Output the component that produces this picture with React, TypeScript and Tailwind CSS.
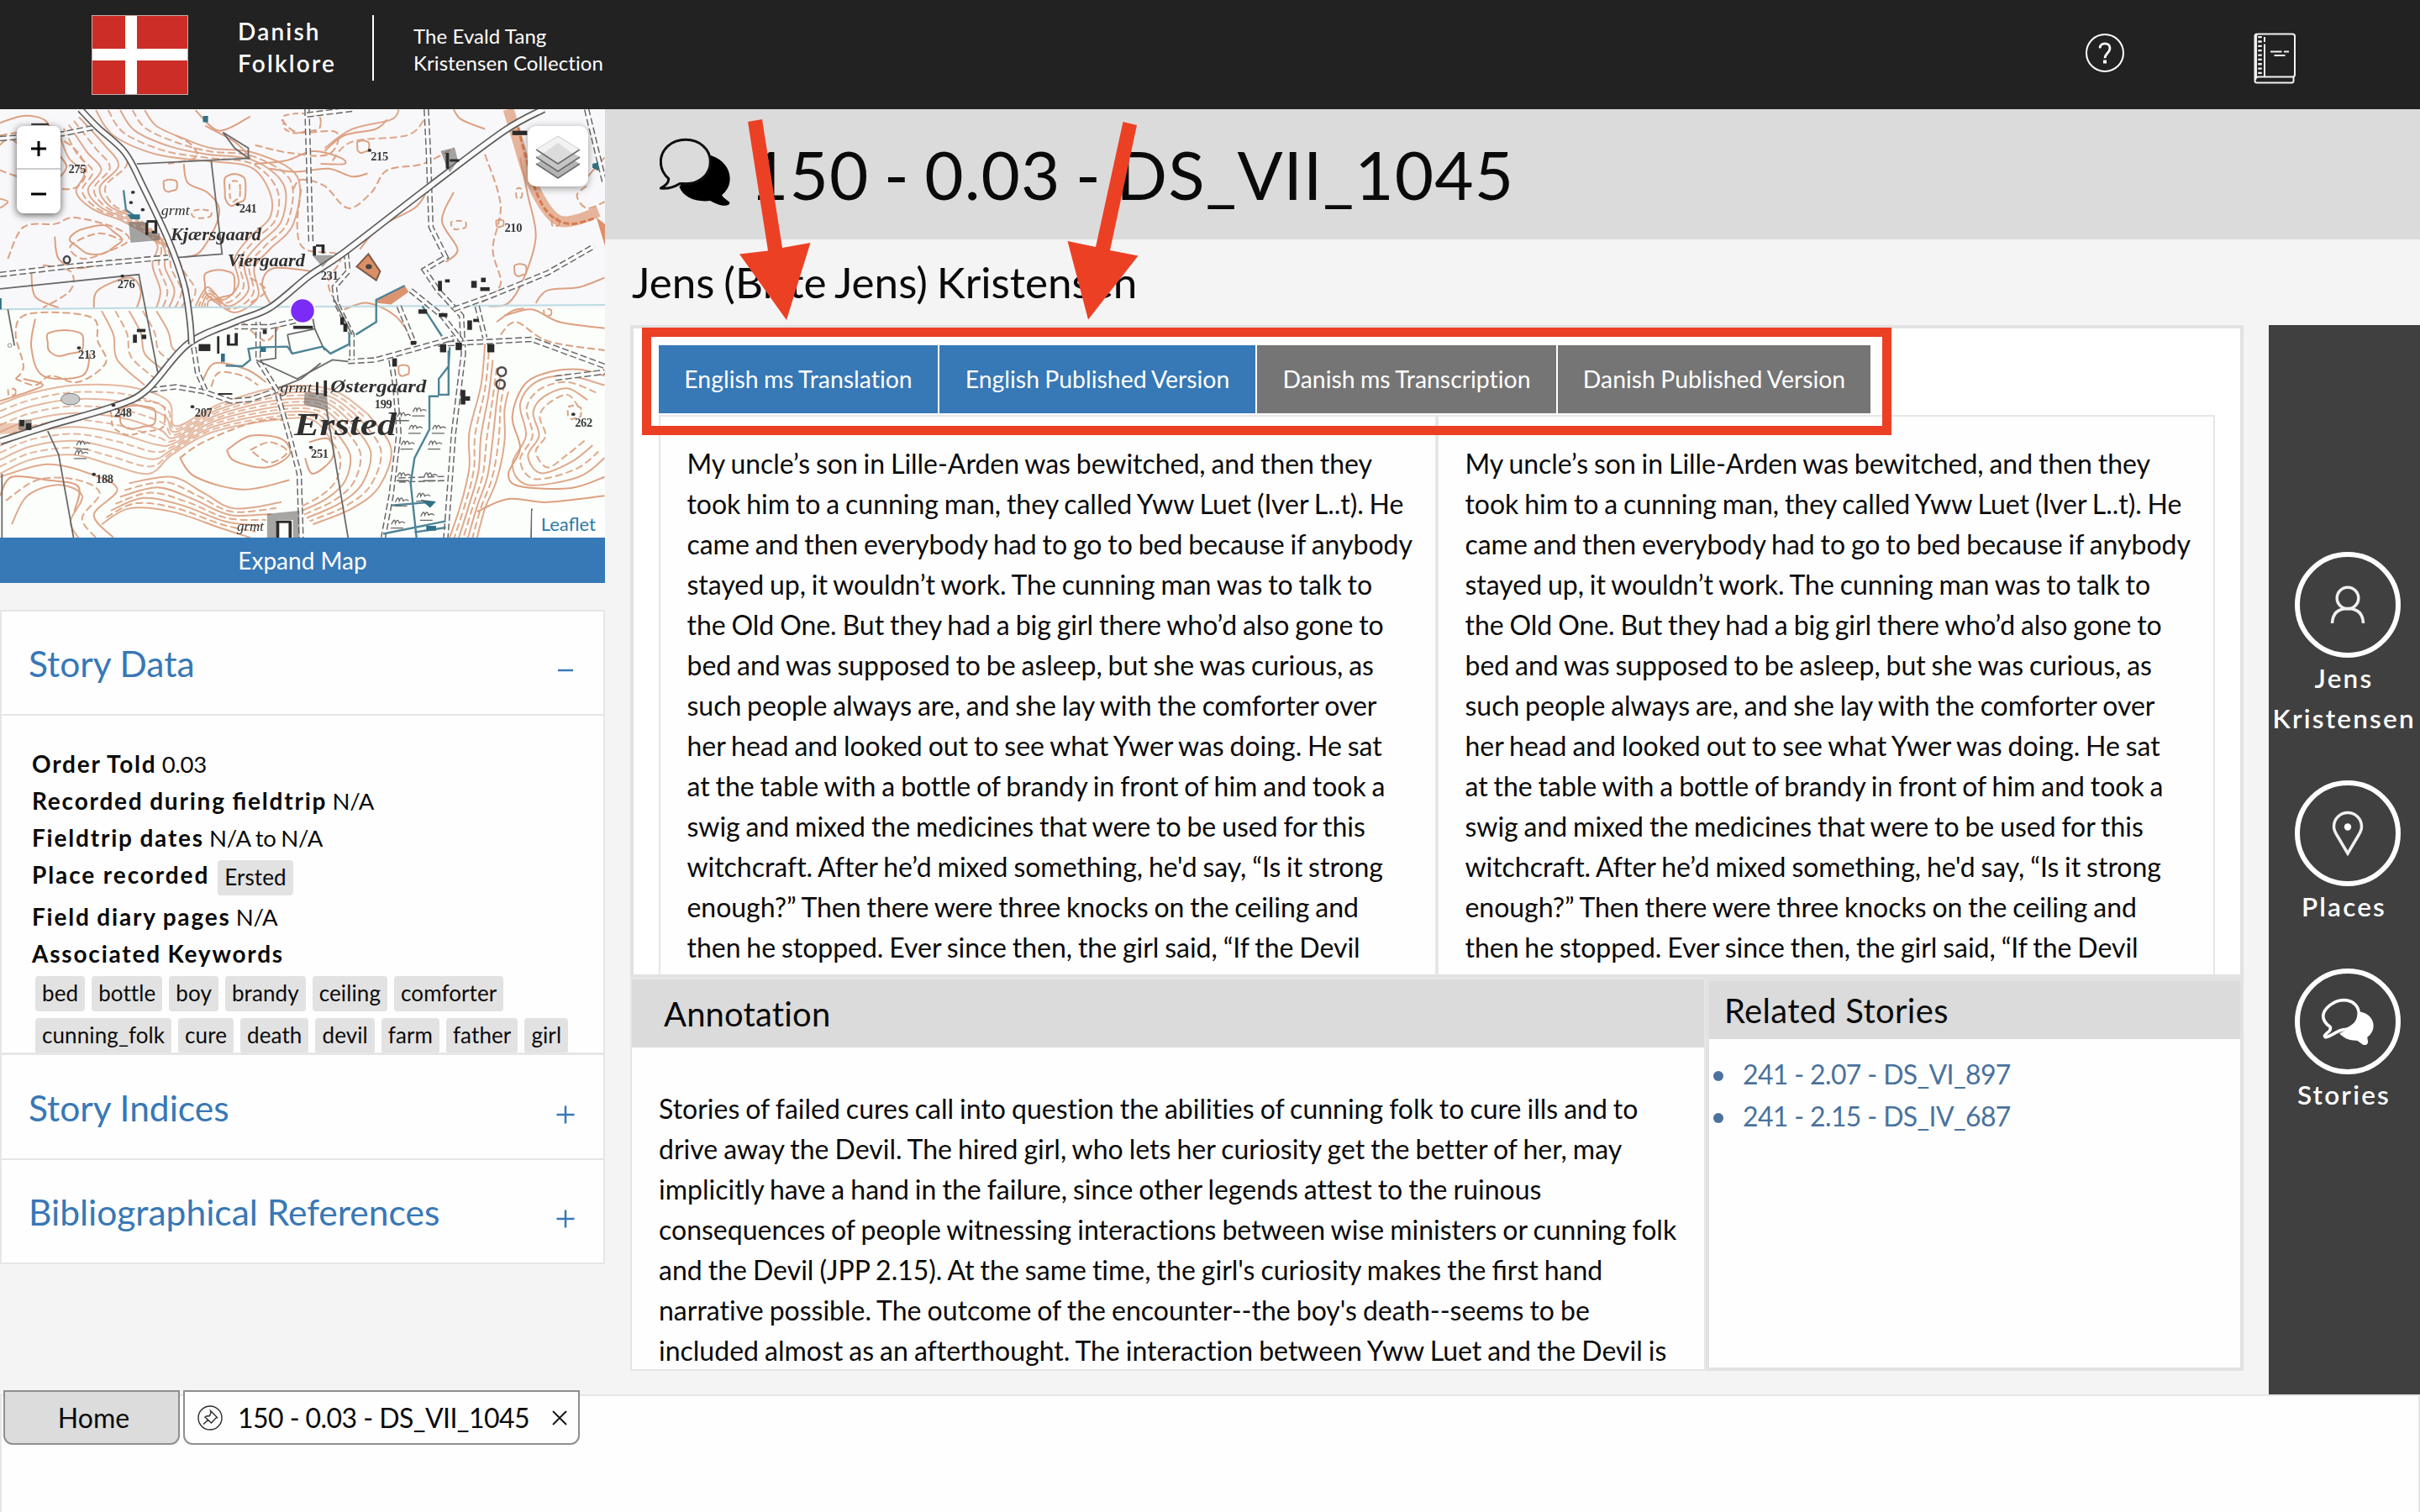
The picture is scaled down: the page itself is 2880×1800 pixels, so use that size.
import type { ReactNode } from "react";

type Pt = [number, number];

/* ---------- geometry helpers for the survey map ---------- */

function smooth(p: Pt[], closed = false) {
  const n = p.length;
  const at = (i: number): Pt => (closed ? p[(i + n) % n] : p[Math.max(0, Math.min(n - 1, i))]);
  let d = `M${p[0][0]} ${p[0][1]}`;
  const last = closed ? n : n - 1;
  for (let i = 0; i < last; i++) {
    const [a, b, c, e] = [at(i - 1), at(i), at(i + 1), at(i + 2)];
    d += `C${b[0] + (c[0] - a[0]) / 6} ${b[1] + (c[1] - a[1]) / 6} ${c[0] - (e[0] - b[0]) / 6} ${c[1] - (e[1] - b[1]) / 6} ${c[0]} ${c[1]}`;
  }
  return d + (closed ? "Z" : "");
}

function line(p: Pt[]) {
  return "M" + p.map((q) => q.join(" ")).join("L");
}

function between(a: Pt[], b: Pt[], n: number): Pt[][] {
  return Array.from({ length: n }, (_, k) => {
    const t = k / (n - 1);
    return a.map((q, i): Pt => [q[0] + (b[i][0] - q[0]) * t, q[1] + (b[i][1] - q[1]) * t]);
  });
}

function ring(cx: number, cy: number, rx: number, ry: number, wob = 0.12, ph = 0): Pt[] {
  return Array.from({ length: 10 }, (_, i): Pt => {
    const t = (i / 10) * Math.PI * 2;
    const k = 1 + wob * Math.sin(i * 2.3 + ph);
    return [cx + Math.cos(t) * rx * k, cy + Math.sin(t) * ry * k];
  });
}

const families: Pt[][][] = [
  between(
    [[150, 100], [175, 180], [215, 230], [195, 290], [240, 345], [320, 385], [400, 450], [390, 520], [410, 600], [400, 655]],
    [[215, 40], [290, 130], [325, 200], [270, 270], [290, 330], [350, 370], [440, 470], [470, 540], [500, 600], [480, 655]],
    6,
  ),
  between(
    [[245, 30], [290, 110], [400, 170], [520, 190], [640, 210], [690, 290], [690, 370], [640, 430], [600, 500], [610, 580], [570, 630], [530, 590], [500, 650]],
    [[370, 30], [400, 80], [470, 120], [540, 150], [650, 165], [760, 240], [750, 390], [690, 470], [650, 530], [660, 620], [600, 670], [540, 630], [530, 655]],
    5,
  ),
  between(
    [[0, 960], [80, 925], [190, 900], [330, 905], [430, 950], [450, 1030], [560, 960], [720, 905], [850, 915], [940, 990]],
    [[0, 1180], [80, 1135], [190, 1120], [280, 1150], [380, 1180], [440, 1120], [540, 1050], [700, 1010], [800, 1010], [850, 1080]],
    11,
  ),
  between(
    [[940, 990], [1000, 1100], [970, 1220], [900, 1290], [800, 1340]],
    [[850, 1080], [870, 1130], [860, 1200], [820, 1250], [760, 1290]],
    6,
  ),
  between(
    [[1240, 770], [1230, 900], [1200, 1050], [1200, 1160], [1180, 1270], [1150, 1382]],
    [[1300, 920], [1290, 980], [1290, 1080], [1270, 1200], [1240, 1290], [1220, 1382]],
    7,
  ),
  between(
    [[0, 1190], [120, 1150], [230, 1180], [300, 1230], [240, 1310], [290, 1382]],
    [[30, 1340], [70, 1250], [150, 1215], [210, 1250], [180, 1330], [200, 1382]],
    3,
  ),
  between(
    [[330, 1210], [440, 1190], [520, 1240], [600, 1290], [720, 1270]],
    [[260, 1340], [330, 1290], [440, 1300], [560, 1350], [640, 1382]],
    7,
  ),
  between(
    [[830, 150], [900, 90], [1000, 60], [1020, 28]],
    [[850, 190], [900, 130], [1040, 110], [1085, 60]],
    2,
  ),
  between(
    [[260, 665], [290, 740], [300, 820], [370, 900]],
    [[400, 665], [430, 730], [440, 780], [460, 800]],
    5,
  ),
  between(
    [[1546, 900], [1450, 870], [1370, 890], [1330, 960], [1345, 1060], [1310, 1150], [1350, 1215], [1480, 1190], [1546, 1130]],
    [[1480, 970], [1450, 930], [1400, 960], [1380, 1000], [1395, 1060], [1370, 1110], [1400, 1160], [1450, 1120], [1500, 1070]],
    4,
  ),
];

const contours: Pt[][] = [
  [[0, 70], [60, 48], [115, 62], [125, 110], [70, 150], [25, 120], [0, 140]],
  [[0, 110], [70, 100], [150, 120], [200, 165], [220, 230], [180, 280], [70, 250], [0, 220]],
  [[150, 170], [170, 210], [140, 250], [90, 240], [60, 210]],
  [[0, 310], [20, 320], [0, 340]],
  [[20, 500], [60, 400], [140, 390], [190, 370], [290, 400], [330, 440], [270, 480], [210, 500], [180, 460], [250, 420], [310, 440]],
  [[140, 430], [150, 500], [200, 530], [280, 510], [350, 500]],
  [[80, 540], [90, 620], [150, 655]],
  [[110, 520], [180, 540], [180, 600], [110, 655]],
  [[240, 655], [250, 600], [330, 560], [360, 600], [350, 655]],
  [[470, 200], [480, 260], [530, 290], [560, 340], [550, 400], [510, 480], [470, 495]],
  [[450, 110], [490, 140], [500, 180], [430, 200]],
  [[500, 30], [560, 95], [640, 50]],
  [[525, 80], [600, 130], [640, 180]],
  [[720, 60], [760, 100], [860, 100], [840, 170], [740, 165], [650, 140]],
  [[650, 200], [730, 190], [800, 160], [870, 180], [880, 200], [820, 200]],
  [[690, 215], [760, 225], [840, 215], [900, 240], [940, 230]],
  [[750, 280], [770, 250], [830, 270], [890, 340], [950, 290], [990, 220], [1080, 200], [1160, 150]],
  [[1160, 290], [1130, 380], [1170, 470], [1140, 510]],
  [[990, 60], [960, 90], [880, 110], [830, 160]],
  [[770, 280], [760, 400], [780, 470], [870, 490], [840, 570], [850, 620]],
  [[920, 470], [970, 400], [1060, 340], [1090, 290]],
  [[1330, 180], [1350, 300], [1370, 430], [1340, 560], [1300, 640], [1250, 650]],
  [[1240, 170], [1280, 330], [1260, 470], [1280, 580], [1230, 640]],
  [[1240, 90], [1180, 60], [1160, 28]],
  [[690, 640], [670, 580], [700, 530], [800, 540]],
  [[1500, 270], [1475, 300], [1500, 340], [1546, 320]],
  [[1546, 180], [1510, 230], [1490, 260]],
  [[1546, 560], [1480, 590], [1400, 600], [1370, 640]],
  [[40, 880], [60, 840], [40, 740], [60, 680], [150, 670], [240, 690], [250, 760], [270, 830], [200, 890], [130, 870], [90, 900], [40, 880]],
  [[90, 690], [80, 780], [110, 870], [210, 870], [230, 800]],
  [[0, 950], [50, 930], [110, 900], [60, 880]],
  [[540, 905], [560, 860], [620, 870], [660, 900]],
  [[520, 880], [550, 830], [630, 850], [680, 890]],
  [[880, 660], [940, 640], [1010, 680], [1060, 760]],
  [[640, 560], [680, 600], [640, 640]],
  [[1546, 870], [1480, 850], [1400, 860], [1340, 900], [1310, 1000], [1330, 1100], [1300, 1180], [1330, 1220], [1460, 1225], [1546, 1190]],
  [[1290, 680], [1360, 660], [1430, 700], [1546, 720]],
  [[1280, 740], [1320, 700], [1400, 760], [1546, 790]],
  [[1270, 700], [1310, 665], [1340, 657]],
  [[1220, 1300], [1300, 1260], [1400, 1270], [1546, 1250]],
  [[460, 1130], [520, 1080], [640, 1020], [720, 1010], [745, 1060]],
  [[460, 1130], [500, 1190], [620, 1230], [740, 1200]],
  [[580, 1105], [640, 1060], [720, 1070], [740, 1120], [680, 1160], [600, 1140], [580, 1105]],
  [[640, 1105], [690, 1080], [735, 1110], [690, 1145], [640, 1105]],
  [[790, 1080], [840, 1070], [850, 1130], [800, 1180], [780, 1130]],
  [[0, 1250], [30, 1190], [120, 1200], [200, 1220], [190, 1300]],
  [[620, 700], [680, 760], [720, 700]],
];

const rings: Pt[][] = [
  ring(600, 280, 28, 52), ring(600, 285, 14, 34), ring(435, 268, 18, 20), ring(515, 358, 26, 14, 0.05),
  ring(928, 145, 16, 20), ring(1172, 393, 20, 14), ring(1278, 388, 10, 12), ring(1327, 293, 8, 18),
  ring(1330, 535, 16, 20), ring(1420, 385, 10, 14), ring(165, 765, 48, 42), ring(30, 922, 10, 12),
  ring(1032, 853, 14, 18), ring(770, 70, 50, 32), ring(350, 1000, 48, 38), ring(1468, 985, 18, 22),
  ring(560, 580, 40, 48), ring(1400, 670, 10, 12), ring(245, 440, 62, 44, 0.1, 2), ring(350, 1000, 72, 56),
];

const roads: { p: Pt[]; w: number }[] = [
  { p: [[0, 1078], [120, 1030], [290, 968], [375, 915], [480, 770], [600, 700], [690, 655], [790, 555], [880, 480], [1100, 270], [1290, 95], [1390, 27]], w: 5.5 },
  { p: [[205, 27], [250, 85], [320, 165], [365, 270], [430, 440], [470, 580], [485, 690], [490, 770]], w: 5 },
];

const dashedRoads: Pt[][] = [
  [[785, 27], [790, 230], [795, 450]],
  [[1090, 27], [1095, 150], [1102, 400], [1140, 495], [1085, 535], [1120, 600], [1180, 680], [1185, 800], [1160, 1050], [1140, 1382]],
  [[1500, 27], [1530, 180], [1546, 260]],
  [[0, 550], [170, 525], [430, 495]],
  [[0, 120], [160, 105], [240, 85]],
  [[1120, 770], [1360, 755], [1546, 840]],
  [[890, 825], [960, 820], [1120, 765], [1160, 750]],
  [[1420, 878], [1546, 858]],
  [[385, 915], [450, 905], [520, 920], [590, 950], [640, 945], [710, 915]],
  [[495, 780], [505, 860], [525, 915]],
  [[710, 930], [740, 1060], [765, 1180], [770, 1382]],
  [[1160, 660], [1250, 620], [1400, 545], [1520, 460]],
  [[1020, 650], [1060, 770]],
  [[1050, 600], [1130, 680], [1180, 760]],
  [[1220, 650], [1240, 750]],
  [[660, 700], [660, 820], [710, 920]],
  [[780, 690], [690, 715], [600, 715]],
  [[1000, 820], [1010, 900], [1020, 1050], [1000, 1250], [980, 1382]],
  [[885, 480], [890, 540], [855, 590], [860, 640], [900, 740], [900, 820]],
  [[1020, 1200], [1140, 1195]],
  [[785, 45], [900, 27]],
];

const thinLines: Pt[][] = [
  [[350, 200], [640, 182]],
  [[540, 190], [568, 485], [445, 497]],
  [[0, 595], [355, 550], [405, 870]],
  [[570, 100], [635, 150], [635, 182], [600, 150], [570, 100]],
  [[20, 660], [37, 775]],
  [[122, 1045], [150, 1120], [188, 1382]],
  [[835, 975], [890, 1382]],
  [[735, 740], [805, 722], [800, 690]],
  [[735, 740], [745, 800]],
  [[805, 722], [830, 790]],
  [[705, 720], [705, 815], [665, 822]],
  [[655, 820], [760, 880], [850, 820], [890, 825]],
  [[710, 910], [770, 880], [820, 830]],
  [[855, 630], [900, 740]],
  [[1360, 1290], [1358, 1382]],
  [[5, 1180], [5, 1382]],
];

const streams: Pt[][] = [
  [[316, 283], [322, 345], [355, 375]],
  [[1035, 585], [962, 630], [962, 700], [910, 740]],
  [[577, 838], [620, 840], [640, 820], [635, 785], [665, 780], [735, 778], [748, 800], [825, 778], [845, 800], [893, 770], [893, 735]],
  [[1080, 650], [1130, 745]],
  [[1150, 780], [1147, 840], [1122, 880], [1122, 930], [1147, 930], [1147, 790]],
  [[1122, 935], [1098, 935], [1098, 1040], [1060, 1130], [1050, 1210], [1065, 1382]],
  [[980, 1370], [1140, 1330]],
  [[1000, 1280], [1100, 1270]],
  [[1060, 1365], [1140, 1350]],
];

const houses: [number, number, number, number][] = [
  [372, 385, 7, 40], [395, 385, 7, 30], [388, 412, 14, 8], [375, 378, 27, 8], [800, 460, 8, 30], [822, 455, 8, 28], [808, 455, 20, 7],
  [350, 722, 22, 10], [340, 740, 10, 26], [362, 740, 12, 14], [555, 745, 6, 55], [580, 740, 8, 34], [600, 735, 8, 38], [582, 768, 26, 7],
  [508, 770, 30, 22], [672, 724, 10, 14], [750, 712, 50, 10], [870, 685, 10, 24], [878, 705, 10, 26], [1125, 770, 16, 26],
  [1165, 765, 16, 24], [1246, 770, 18, 26], [1003, 815, 12, 26], [1050, 760, 14, 12], [1195, 695, 12, 30], [1210, 690, 14, 10],
  [1120, 570, 10, 32], [1138, 565, 12, 10], [1205, 570, 14, 22], [1230, 560, 12, 14], [1228, 590, 24, 12], [1178, 915, 12, 46], [1188, 935, 14, 14],
  [1140, 165, 8, 50], [1150, 185, 24, 8], [808, 890, 6, 40], [828, 885, 8, 50], [706, 1330, 8, 52], [738, 1330, 8, 52], [706, 1328, 38, 8],
  [50, 1010, 12, 20], [66, 1020, 14, 22], [1070, 660, 22, 14], [1122, 672, 22, 12], [1310, 95, 38, 14], [80, 72, 44, 5], [558, 925, 36, 5],
];

const spots: { x: number; y: number; t: string }[] = [
  { x: 175, y: 228, t: "275" }, { x: 612, y: 354, t: "241" }, { x: 948, y: 188, t: "215" }, { x: 1290, y: 415, t: "210" },
  { x: 300, y: 592, t: "276" }, { x: 820, y: 566, t: "231" }, { x: 200, y: 817, t: "213" }, { x: 292, y: 998, t: "248" },
  { x: 498, y: 998, t: "207" }, { x: 795, y: 1130, t: "251" }, { x: 245, y: 1208, t: "188" }, { x: 958, y: 973, t: "199" }, { x: 1470, y: 1030, t: "262" },
];

const names: { x: number; y: number; t: string; s: number; w: number }[] = [
  { x: 436, y: 441, t: "Kjærsgaard", s: 21, w: 108 },
  { x: 582, y: 524, t: "Viergaard", s: 20, w: 92 },
  { x: 845, y: 921, t: "Østergaard", s: 22, w: 114 },
  { x: 752, y: 1058, t: "Ersted", s: 38, w: 122 },
  { x: 412, y: 361, t: "grmt", s: 17, w: 34 },
  { x: 716, y: 923, t: "grmt", s: 17, w: 38 },
  { x: 606, y: 1361, t: "grmt", s: 17, w: 32 },
];

const meadow: Pt[] = [
  [1070, 985], [1030, 1000], [1060, 1040], [1120, 1040], [1040, 1090], [1110, 1090], [1030, 1190], [1098, 1190],
  [1025, 1270], [1080, 1255], [1015, 1340], [1090, 1315], [210, 1090], [205, 1120],
];

function SurveyMap() {
  return (
    <div className="absolute inset-0 overflow-hidden">
      <svg className="absolute inset-0 h-full w-full blur-[0.6px]" viewBox="0 27 1547 1355" preserveAspectRatio="none" fill="none">
        <rect x="0" y="27" width="1547" height="630" fill="#f8f8fa" />
        <rect x="0" y="657" width="1547" height="725" fill="#fcfefb" />
        <g stroke="#dca081" strokeWidth="2">
          {families.map((f, i) =>
            f.map((p, k) => (
              <path key={`${i}-${k}`} d={smooth(p)} vectorEffect="non-scaling-stroke" strokeDasharray={k % 2 ? "9 4" : undefined} opacity={i === 2 ? 0.75 : 0.9} />
            )),
          )}
          {contours.map((p, i) => (
            <path key={i} d={smooth(p)} vectorEffect="non-scaling-stroke" strokeDasharray={i % 3 === 1 ? "9 4" : undefined} />
          ))}
          {rings.map((p, i) => (
            <path key={i} d={smooth(p, true)} vectorEffect="non-scaling-stroke" strokeDasharray={i % 2 ? "7 4" : undefined} />
          ))}
        </g>
        <path d={smooth([[1300, 27], [1325, 130], [1350, 230], [1390, 330], [1430, 380], [1480, 375], [1530, 350]])} stroke="#dd9069" strokeWidth="13" opacity=".65" vectorEffect="non-scaling-stroke" />
        <path d={smooth([[1320, 60], [1345, 180], [1375, 300], [1410, 365], [1460, 390], [1525, 370]])} stroke="#d67a50" strokeWidth="3" strokeDasharray="7 3" vectorEffect="non-scaling-stroke" />
        <path d="M1525 370L1547 390V460Z" fill="#dd9069" />
        <path d="M912 525L942 485L972 540L962 568Z" fill="#dc8f66" stroke="#7b5b48" strokeWidth="2" vectorEffect="non-scaling-stroke" />
        <path d="M962 630L1035 585L1045 605L1000 645L965 640Z" fill="#dc9470" />
        <circle cx="943" cy="525" r="8" fill="#444" />
        <path d="M0 1020H60V1050L0 1055Z" fill="#dc9470" opacity=".5" />
        <path d="M0 660L700 652L1547 646" stroke="#bcdbe2" strokeWidth="2" vectorEffect="non-scaling-stroke" />
        {dashedRoads.map((p, i) => (
          <g key={i}>
            <path d={line(p)} stroke="#686868" strokeWidth="6.5" strokeDasharray="8 3.5" vectorEffect="non-scaling-stroke" />
            <path d={line(p)} stroke="#fbfcfb" strokeWidth="3.5" vectorEffect="non-scaling-stroke" />
          </g>
        ))}
        {thinLines.map((p, i) => (
          <path key={i} d={line(p)} stroke="#6a6a6a" strokeWidth="1.8" vectorEffect="non-scaling-stroke" />
        ))}
        {roads.map((r, i) => (
          <g key={i}>
            <path d={smooth(r.p)} stroke="#5c5c5c" strokeWidth={r.w + 3.4} vectorEffect="non-scaling-stroke" />
            <path d={smooth(r.p)} stroke="#fafafa" strokeWidth={r.w} vectorEffect="non-scaling-stroke" />
          </g>
        ))}
        {streams.map((p, i) => (
          <path key={i} d={line(p)} stroke="#4f8496" strokeWidth="2.4" vectorEffect="non-scaling-stroke" />
        ))}
        <path d="M519 48H532V68H519ZM1515 200L1530 195V222L1515 212ZM665 780H680V795H665ZM565 800H575V826H565ZM1075 1262L1115 1268L1100 1288ZM1090 1345H1115V1360H1090ZM0 625H4V660H0ZM325 360H358V375H335Z" fill="#2f7187" />
        <path d="M330 385H370V415L408 420V440L335 448ZM780 925H835L838 978L778 960ZM1128 160L1162 150L1170 190L1150 225L1140 200ZM684 1308L765 1298V1382H750V1325H705V1382H684ZM800 490H850L825 525ZM48 1010H80V1040H48Z" fill="#6f6b68" opacity=".6" stroke="#444" strokeWidth="1.5" />
        {houses.map((h, i) => (
          <rect key={i} x={h[0]} y={h[1]} width={h[2]} height={h[3]} fill="#2b2b2b" />
        ))}
        <g stroke="#4a4a4a" strokeWidth="2.5">
          <ellipse cx="171" cy="503" rx="8" ry="11" vectorEffect="non-scaling-stroke" />
          <ellipse cx="1283" cy="857" rx="11" ry="14" vectorEffect="non-scaling-stroke" />
          <ellipse cx="1280" cy="897" rx="11" ry="14" vectorEffect="non-scaling-stroke" />
          <ellipse cx="25" cy="774" rx="5" ry="6" strokeWidth="1.5" />
        </g>
        <ellipse cx="180" cy="944" rx="24" ry="18" fill="#c9c9c9" stroke="#6a6a6a" strokeWidth="2" />
        {meadow.map(([x, y], i) => (
          <path key={i} d={`M${x - 14} ${y}q8 -24 10 -4q6 -18 10 0q8 -8 14 0M${x - 16} ${y + 12}h32`} stroke="#666" strokeWidth="1.3" vectorEffect="non-scaling-stroke" />
        ))}
        {([[340, 290], [335, 322], [365, 345], [945, 157], [608, 328], [202, 782], [492, 968], [795, 1097], [240, 1182], [1466, 992], [290, 963], [313, 555]] as Pt[]).map(([x, y], i) => (
          <circle key={i} cx={x} cy={y} r="5" fill="#333" />
        ))}
      </svg>
      <svg className="absolute inset-0 h-full w-full blur-[0.5px]" viewBox="0 0 720 510">
        <g className="font-['Liberation_Serif',serif]" fill="#303030" fontStyle="italic">
          {names.map((n, i) => (
            <text key={i} x={n.x / 2.1486} y={n.y / 2.6576 - 10} fontSize={n.s} textLength={n.w} lengthAdjust="spacingAndGlyphs" fontWeight={n.s > 18 ? 700 : 400}>
              {n.t}
            </text>
          ))}
        </g>
        <g className="font-['Liberation_Serif',serif]" fill="#3a3a3a">
          {spots.map((n, i) => (
            <text key={i} x={n.x / 2.1486} y={n.y / 2.6576 - 10} fontSize="14.5" fontWeight="700" textLength="21">
              {n.t}
            </text>
          ))}
        </g>
      </svg>
      <svg className="absolute top-[224px] left-[344px] h-8 w-8" viewBox="0 0 32 32">
        <circle cx="16" cy="16" r="14.5" fill="#7b2bf7" stroke="#fff" strokeWidth="1.5" />
      </svg>
    </div>
  );
}

/* ---------- icons ---------- */

function LayersIcon() {
  return (
    <svg className="h-[52px] w-[54px]" viewBox="0 0 54 52">
      <path d="M1 34L27 51L53 34L27 18Z" fill="#b4b4b4" />
      <path d="M1 34L27 51L53 34" fill="none" stroke="#6b6b6b" strokeWidth="1.5" />
      <path d="M1 26L27 43L53 26L27 10Z" fill="#c6c6c6" />
      <path d="M1 26L27 43L53 26" fill="none" stroke="#6b6b6b" strokeWidth="1.5" />
      <path d="M1 17L27 34L53 17L27 1Z" fill="#dcdcdc" />
      <path d="M1 17L27 1L53 17L45 22L27 9L9 22Z" fill="#f2f2f2" />
      <path d="M1 17L27 34L53 17" fill="none" stroke="#6b6b6b" strokeWidth="1.5" />
      <path d="M1 17L27 1L53 17" fill="none" stroke="#cfcfcf" strokeWidth="1" />
    </svg>
  );
}

function HelpIcon() {
  return (
    <svg className="h-[46px] w-[46px]" viewBox="0 0 46 46" fill="none" stroke="#fff">
      <circle cx="23" cy="23" r="22" strokeWidth="2" />
      <path d="M17.2 17.4C17 13.800 19.500 11.800 23 11.800S29 14 29 17.200C29 20 27.600 21.500 25.900 23.400C24.200 25.300 23 26.300 23 29.200" strokeWidth="2.800" />
      <path d="M23 31.500V35.500" strokeWidth="4" />
    </svg>
  );
}

function BookIcon() {
  return (
    <svg className="h-[61px] w-[51px]" viewBox="0 0 51 61" fill="none" stroke="#f2f2f2" strokeWidth="2">
      <path d="M3 53V4Q3 1.500 5.500 1.500H46Q49 1.500 49 4V49.500Q49 52.500 46.500 52.500H5Q2.500 53 2 56M1.500 4Q1.500 1.500 4 1.500M1.500 4V57Q1.500 59.500 4 59.500H45.500Q47.500 59.500 47.500 57V53" />
      <path d="M13 5V11M13 13.500V52" />
      <path d="M20 22.500H33.500M36 22.500H42M24.500 27H37.500" />
      <path d="M7.500 4V51" strokeWidth="4.500" strokeDasharray="2.300 3.050" />
    </svg>
  );
}

function TalkIcon() {
  return (
    <svg className="h-[82px] w-[84px]" viewBox="75 42 252 244">
      <path d="M258 104C300 118 326 150 326 187C326 212 314 232 297 246C303 257 315 263 325 271C326 282 312 284 300 283C282 281 268 272 256 266C205 272 160 255 145 216Z" fill="#000" />
      <path d="M168 48C218 48 256 82 256 127C256 172 218 205 168 205C160 205 152 204 146 205C130 215 104 224 79 221C96 212 108 200 107 187C90 172 79 152 79 127C79 82 118 48 168 48Z" fill="#dbdbdb" stroke="#0d0d0d" strokeWidth="9" />
    </svg>
  );
}

function StoriesGlyph() {
  return (
    <svg className="h-[56px] w-[64px]" viewBox="126 130 192 170">
      <path d="M268 180C298 186 316 208 315 232C314 252 304 264 293 272C292 280 298 288 294 294C290 302 282 302 275 298L256 284C226 286 204 272 192 258L230 240Z" fill="#fff" />
      <path d="M208 138C242 138 264 162 262 190C260 220 236 242 206 245C184 247 168 266 142 272C134 268 142 262 147 257C158 250 162 240 158 234C142 224 133 208 133 194C136 166 174 138 208 138Z" fill="#404040" stroke="#fff" strokeWidth="11" />
    </svg>
  );
}

function PersonGlyph() {
  return (
    <svg className="h-[46px] w-[42px]" viewBox="0 0 42 46" fill="none" stroke="#f0f0f0" strokeWidth="3.500">
      <circle cx="21" cy="15" r="12.800" />
      <path d="M2.500 45C3 33 10 27.500 21 27.500S39 33 39.500 45" />
    </svg>
  );
}

function PinGlyph() {
  return (
    <svg className="h-[54px] w-[38px]" viewBox="0 0 38 54" fill="none" stroke="#f0f0f0" strokeWidth="3.500">
      <path d="M19 51L6 29C3.500 25 2.500 22.500 2.500 19C2.500 9.500 10 2.500 19 2.500S35.500 9.500 35.500 19C35.500 22.500 34.500 25 32 29Z" />
      <circle cx="19" cy="19.500" r="4.200" fill="#fff" stroke="none" />
    </svg>
  );
}

function TabPin() {
  return (
    <svg className="h-[30px] w-[30px]" viewBox="0 0 30 30" fill="none" stroke="#2b2b2b" strokeWidth="1.400">
      <circle cx="15" cy="15" r="14" />
      <path d="M15.500 6.500L23.500 14.500L21.500 15.500L17.500 20L16.500 21L9 14L10.500 13L14.500 12.500L16 8.500ZM13 17L7 22.500" />
    </svg>
  );
}

/* ---------- content ---------- */

const story = [
  "My uncle’s son in Lille-Arden was bewitched, and then they",
  "took him to a cunning man, they called Yww Luet (Iver L..t). He",
  "came and then everybody had to go to bed because if anybody",
  "stayed up, it wouldn’t work. The cunning man was to talk to",
  "the Old One. But they had a big girl there who’d also gone to",
  "bed and was supposed to be asleep, but she was curious, as",
  "such people always are, and she lay with the comforter over",
  "her head and looked out to see what Ywer was doing. He sat",
  "at the table with a bottle of brandy in front of him and took a",
  "swig and mixed the medicines that were to be used for this",
  "witchcraft. After he’d mixed something, he'd say, “Is it strong",
  "enough?” Then there were three knocks on the ceiling and",
  "then he stopped. Ever since then, the girl said, “If the Devil",
];

const Fi = () => <span className="[font-variant-ligatures:normal] [font-feature-settings:'liga']">fi</span>;

const annotation: ReactNode[] = [
  "Stories of failed cures call into question the abilities of cunning folk to cure ills and to",
  "drive away the Devil. The hired girl, who lets her curiosity get the better of her, may",
  "implicitly have a hand in the failure, since other legends attest to the ruinous",
  "consequences of people witnessing interactions between wise ministers or cunning folk",
  <>and the Devil (JPP 2.15). At the same time, the girl's curiosity makes the <Fi />rst hand</>,
  "narrative possible. The outcome of the encounter--the boy's death--seems to be",
  "included almost as an afterthought. The interaction between Yww Luet and the Devil is",
];

const keywords = [
  ["bed", "bottle", "boy", "brandy", "ceiling", "comforter"],
  ["cunning_folk", "cure", "death", "devil", "farm", "father", "girl"],
];

function Chip({ children }: { children: ReactNode }) {
  return <span className="block h-[42px] rounded-[4px] bg-[#e2e2e2] px-2 text-[26px] leading-[41px] tracking-[0.1px]">{children}</span>;
}

function Field({ label, value }: { label: ReactNode; value?: string }) {
  return (
    <p className="h-11 text-[28px] leading-[44px] [word-spacing:-1px]">
      <b className="tracking-[1.8px]">{label}</b> <span className="text-[27.5px] tracking-[-0.25px]">{value}</span>
    </p>
  );
}

function SectionHead({ title, open, tall }: { title: string; open?: boolean; tall?: boolean }) {
  return (
    <div className={`flex shrink-0 items-center justify-between pt-[2px] pr-[34px] pl-8 text-[#3778b6] ${tall ? "h-[123px]" : "h-[122px]"}`}>
      <h3 className="text-[42.5px] leading-[52px]">{title}</h3>
      <svg className="mt-4 h-[22px] w-[22px]" viewBox="0 0 22 22" stroke="#3778b6" strokeWidth="2.500">
        {open ? <path d="M2 11H20" /> : <path d="M0.500 11H21.500M11 0.500V21.500" />}
      </svg>
    </div>
  );
}

function Story() {
  return (
    <div className="flex-1 overflow-hidden border-x-2 border-[#e6e6e6] pt-8 pl-[31.5px] text-[32px] leading-[48px] tracking-[-0.03px] whitespace-nowrap [word-spacing:-1.25px]">
      {story.map((l) => (
        <p key={l}>{l}</p>
      ))}
    </div>
  );
}

function RailItem({ icon, label }: { icon: ReactNode; label: string }) {
  return (
    <div className="flex w-full flex-col items-center">
      <div className="ml-2 flex h-[126px] w-[126px] items-center justify-center rounded-full border-[6px] border-white">{icon}</div>
      <p className="-ml-px w-[170px] text-center text-[31.5px] leading-[48px] font-semibold tracking-[2.2px] text-white">{label}</p>
    </div>
  );
}

export default function App() {
  return (
    <div className="relative flex h-[1800px] w-[2880px] flex-col overflow-hidden bg-[#f4f4f4] font-['Lato',sans-serif] text-[#0a0a0a] [font-variant-ligatures:none]">
      <header className="flex h-[130px] shrink-0 items-start bg-[#222] text-white">
        <div className="mt-[18px] ml-[109px] grid h-[95px] w-[115px] grid-cols-[40px_61px] grid-rows-[40px_41px] gap-x-[14px] gap-y-[14px] bg-white outline-1 -outline-offset-1 outline-[#c9a9a7]">
          <div className="bg-[#cd2d27]" />
          <div className="bg-[#cd2d27]" />
          <div className="bg-[#cd2d27]" />
          <div className="bg-[#cd2d27]" />
        </div>
        <div className="mt-[18px] ml-[59px] w-[160px] text-[28px] leading-[38px] font-semibold tracking-[2.2px]">
          Danish
          <br />
          Folklore
        </div>
        <div className="mt-[18px] h-[78px] w-[2px] bg-white" />
        <div className="mt-[27px] ml-[47px] text-[24px] leading-[32px] tracking-[0.08px] whitespace-nowrap">
          The Evald Tang
          <br />
          Kristensen Collection
        </div>
        <div className="mt-10 mr-[154px] ml-auto">
          <HelpIcon />
        </div>
        <div className="mt-[39px] mr-[147px]">
          <BookIcon />
        </div>
      </header>

      <div className="flex h-[1530px] shrink-0">
        <aside className="w-[720px] shrink-0">
          <div className="relative h-[510px] overflow-hidden">
            <SurveyMap />
            <div className="absolute top-5 left-5 w-[52px] overflow-hidden rounded-[8px] bg-white shadow-[0_2px_10px_rgba(0,0,0,0.65)]">
              <div className="flex h-[52px] items-center justify-center border-b-2 border-[#ccc]">
                <svg className="mt-[4px] h-5 w-5" viewBox="0 0 20 20" stroke="#000" strokeWidth="3"><path d="M1 10H19M10 1V19" /></svg>
              </div>
              <div className="flex h-[52px] items-center justify-center">
                <svg className="mt-[6px] h-5 w-5" viewBox="0 0 20 20" stroke="#000" strokeWidth="3"><path d="M1 10H19" /></svg>
              </div>
            </div>
            <div className="absolute top-5 right-5 flex h-[72px] w-[72px] items-center justify-center rounded-[10px] bg-white pt-[2px] shadow-[0_2px_10px_rgba(0,0,0,0.4)]">
              <LayersIcon />
            </div>
            <div className="absolute right-0 bottom-0 h-8 bg-white/70 px-[11px] text-[22px] leading-[31px] text-[#2f7ba8] [font-variant-ligatures:normal]">Leaflet</div>
          </div>
          <div className="h-[54px] bg-[#3778b6] text-center text-[28px] leading-[54px] text-white">Expand Map</div>

          <section className="mt-8 flex h-[779px] flex-col border-2 border-[#e6e6e6] bg-[#fefefe]">
            <SectionHead title="Story Data" open />
            <div className="h-[406px] shrink-0 overflow-hidden border-t-2 border-b-[3px] border-[#e6e6e6] pt-[35px] pl-9">
              <Field label="Order Told" value="0.03" />
              <Field label={<>Recorded during <Fi />eldtrip</>} value="N/A" />
              <Field label="Fieldtrip dates" value="N/A to N/A" />
              <div className="flex h-[50px] text-[28px] leading-[44px]">
                <b className="mr-[10px] tracking-[1.9px]">Place recorded</b>
                <div className="mt-[5px]">
                  <Chip>Ersted</Chip>
                </div>
              </div>
              <Field label="Field diary pages" value="N/A" />
              <Field label="Associated Keywords" />
              <div className="mt-[5px] ml-1 flex flex-col gap-2">
                {keywords.map((row) => (
                  <div key={row[0]} className="flex gap-2">
                    {row.map((k) => (
                      <Chip key={k}>{k}</Chip>
                    ))}
                  </div>
                ))}
              </div>
            </div>
            <SectionHead title="Story Indices" tall />
            <div className="h-[2px] shrink-0 bg-[#e6e6e6]" />
            <SectionHead title="Bibliographical References" />
          </section>
        </aside>

        <main className="flex flex-1 flex-col">
          <div className="flex h-[155px] shrink-0 items-start bg-[#dbdbdb] pl-[65px]">
            <div className="mt-[34px]">
              <TalkIcon />
            </div>
            <h1 className="mt-[29px] ml-[23px] text-[80px] leading-[96px] tracking-[1.05px] whitespace-nowrap [word-spacing:-4px]">150 - 0.03 - DS_VII_1045</h1>
          </div>
          <h2 className="h-[102px] shrink-0 pt-5 pl-8 text-[51.2px] leading-[60px] [word-spacing:-2.2px]">Jens (Bitte Jens) Kristensen</h2>

          <div className="flex h-[1273px] pl-[30px]">
            <div className="h-[1245px] w-[1920px] shrink-0">
              <section className="flex h-[777px] flex-col border-4 border-[#e2e2e2] bg-white px-[30px] pt-5">
                <div className="flex h-[81px] shrink-0 gap-[2px] text-center text-[28.4px] leading-[80px] text-white [word-spacing:-0.9px]">
                  <div className="w-[332px] bg-[#3778b6]">English ms Translation</div>
                  <div className="w-[376px] bg-[#3778b6]">English Published Version</div>
                  <div className="w-[356px] bg-[#757575]">Danish ms Transcription</div>
                  <div className="w-[372px] bg-[#757575]">Danish Published Version</div>
                </div>
                <div className="mt-[2px] flex min-h-0 flex-1 border-t-2 border-[#e6e6e6] bg-[#fefefe]">
                  <Story />
                  <Story />
                </div>
              </section>
              <div className="flex h-[468px]">
                <section className="w-[1280px] shrink-0 overflow-hidden border-2 border-[#e6e6e6] bg-[#fefefe]">
                  <h3 className="h-[81px] bg-[#dbdbdb] pt-[17px] pl-[38px] text-[40px] leading-[48px] tracking-[0.15px]">Annotation</h3>
                  <div className="pt-[49px] pl-8 text-[32px] leading-[48px] whitespace-nowrap [word-spacing:-1.15px]">
                    {annotation.map((l, i) => (
                      <p key={i}>{l}</p>
                    ))}
                  </div>
                </section>
                <section className="flex-1 border-4 border-[#e2e2e2] bg-[#fefefe]">
                  <h3 className="h-[69px] bg-[#dbdbdb] pt-[11px] pl-[18px] text-[40px] leading-[48px] tracking-[0.3px]">Related Stories</h3>
                  <ul className="pt-[17px] text-[32px] leading-[50px] tracking-[-0.64px] text-[#4a729c]">
                    {["241 - 2.07 - DS_VI_897", "241 - 2.15 - DS_IV_687"].map((s) => (
                      <li key={s} className="flex items-center">
                        <span className="mt-[3px] mr-[23px] ml-[5px] h-3 w-3 rounded-full bg-[#4a729c]" />
                        {s}
                      </li>
                    ))}
                  </ul>
                </section>
              </div>
            </div>
            <nav className="ml-[30px] flex w-[180px] flex-col gap-[50px] bg-[#404040] pt-[270px]">
              <RailItem icon={<PersonGlyph />} label="Jens Kristensen" />
              <RailItem icon={<PinGlyph />} label="Places" />
              <RailItem icon={<StoriesGlyph />} label="Stories" />
            </nav>
          </div>
        </main>
      </div>

      <footer className="flex flex-1 items-start gap-1 border-x-2 border-t-2 border-[#e6e6e6] bg-[#fefefe] pl-[2px] text-[32px] leading-[61px]">
        <div className="-mt-[7px] h-[65px] w-[210px] rounded-b-[11px] border-2 border-[#8f8f8f] bg-[#dcdcdc] pl-[5px] text-center">Home</div>
        <div className="-mt-[7px] flex h-[65px] w-[472px] items-center rounded-b-[11px] border-2 border-[#8f8f8f] bg-[#fefefe] pl-[15px]">
          <TabPin />
          <span className="ml-[18px] w-[374px] tracking-[-0.56px] whitespace-nowrap">150 - 0.03 - DS_VII_1045</span>
          <svg className="h-[18px] w-[18px]" viewBox="0 0 18 18" stroke="#111" strokeWidth="1.800"><path d="M1 1L17 17M17 1L1 17" /></svg>
        </div>
      </footer>

      <div className="pointer-events-none absolute top-[390px] left-[764px] h-[128px] w-[1487px] border-[11.5px] border-[#ec4025]" />
      <svg className="pointer-events-none absolute top-[140px] left-[870px] h-[250px] w-[500px]" viewBox="870 140 500 250" fill="#ec4025">
        <path d="M890 145L907 142L931 295L964.500 289L936 381L880 302.500L914 298.500Z" />
        <path d="M1336.500 145L1353 149L1321 298L1354.500 304.500L1295 380.500L1270.500 287L1304 294Z" />
      </svg>
    </div>
  );
}
